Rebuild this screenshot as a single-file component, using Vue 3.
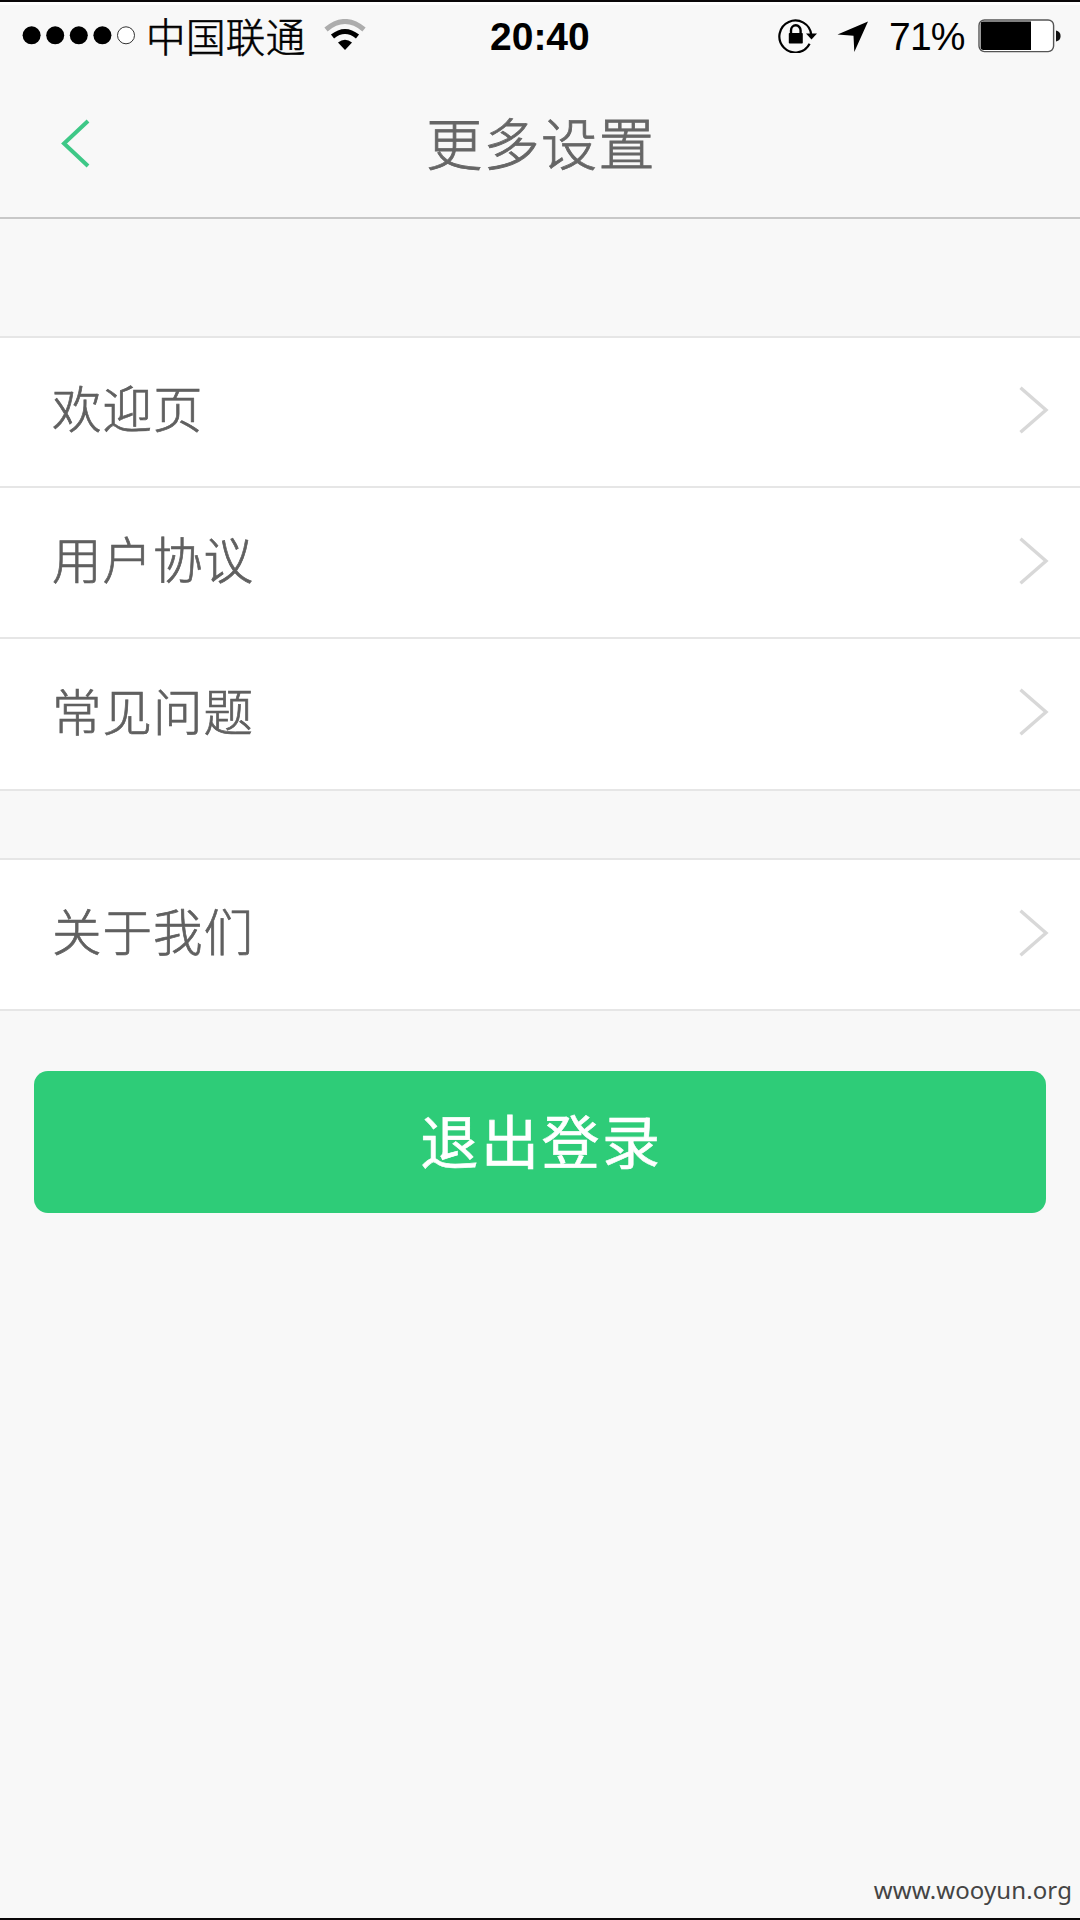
<script setup>
const groups = [
  { id: 'help', items: ['欢迎页', '用户协议', '常见问题'] },
  { id: 'about', items: ['关于我们'] }
]
</script>

<template>
  <div class="screen">
    <div class="status">
      <svg class="signal" width="114" height="20" viewBox="0 0 114 20">
        <circle v-for="n in 4" :key="n" :cx="9.6 + (n - 1) * 23.6" cy="10.3" r="9" fill="#000" />
        <circle cx="104" cy="10.3" r="8.5" fill="#fff" stroke="#333" stroke-width="1" />
      </svg>
      <span class="carrier">中国联通</span>
      <svg class="wifi" width="42" height="32" viewBox="0 0 42 32">
        <path d="M2 10.5Q21-5.5 40 10.5" fill="none" stroke="#adadad" stroke-width="5" />
        <path d="M8.5 17.5Q21 7.5 33.5 17.5" fill="none" stroke="#000" stroke-width="5" />
        <path d="M14 23.5Q21 18 28 23.5L21 31Z" fill="#000" />
      </svg>
      <span class="time">20:40</span>
      <svg class="lock" width="40" height="36" viewBox="0 0 40 36">
        <path d="M31.6 26.8A16 16 0 1 1 33.3 18" fill="none" stroke="#000" stroke-width="2.2" />
        <path d="M28 16.5H39L33.5 22.5Z" fill="#000" />
        <path d="M13 17V13.5A4.8 5.2 0 0 1 22.6 13.5V17" fill="none" stroke="#000" stroke-width="2.4" />
        <rect x="10.8" y="16" width="14" height="10.5" rx="0.8" fill="#000" />
      </svg>
      <svg class="arrow" width="32" height="32" viewBox="0 0 32 32">
        <path d="M31 0.5L17.3 31L16.5 14.8L0.5 13.6Z" fill="#000" />
      </svg>
      <span class="percent">71%</span>
      <svg class="battery" width="84" height="34" viewBox="0 0 84 34">
        <rect x="1" y="1" width="74.6" height="31.6" rx="5.5" fill="#fff" stroke="#555" stroke-width="1.4" />
        <path d="M5 2.6H53V31H5Q2.6 31 2.6 28.6V5Q2.6 2.6 5 2.6Z" fill="#000" />
        <path d="M78 11.5Q82.6 12.5 82.6 17T78 22.5Z" fill="#111" />
      </svg>
    </div>

    <header class="nav">
      <svg class="back" width="32" height="52" viewBox="0 0 32 52">
        <path d="M28 3L4 25.5L28 48" fill="none" stroke="#3ec887" stroke-width="4" />
      </svg>
      <h1 class="title">更多设置</h1>
    </header>

    <main class="content">
      <ul v-for="group in groups" :key="group.id" class="group">
        <li v-for="label in group.items" :key="label" class="row">
          <span class="label">{{ label }}</span>
          <svg class="chevron" width="30" height="48" viewBox="0 0 30 48">
            <path d="M1.5 1.8L27 24L1.5 46.2" fill="none" stroke="#d8d8d8" stroke-width="3.4" />
          </svg>
        </li>
      </ul>
      <button class="logout" type="button">退出登录</button>
    </main>

    <footer class="source">www.wooyun.org</footer>
  </div>
</template>

<style>
body {
  margin: 0;
}
</style>

<style scoped>
.screen {
  box-sizing: border-box;
  width: 1080px;
  height: 1920px;
  display: flex;
  flex-direction: column;
  background: #f8f8f8;
  border-top: 2px solid #0a0809;
  border-bottom: 2px solid #0a0809;
  font-family: "Liberation Sans", "Noto Sans CJK SC", sans-serif;
  overflow: hidden;
}

.status {
  height: 68px;
  flex: none;
  display: flex;
  align-items: flex-start;
  color: #000;
  border-top: 3px solid #fff;
  box-sizing: border-box;
}

.status > * {
  flex: none;
  white-space: nowrap;
}

.signal {
  margin: 20px 0 0 22px;
}

.carrier {
  width: 162px;
  margin: 1px 0 0 10px;
  font: 300 39.5px/58px "Noto Sans CJK SC", sans-serif;
  letter-spacing: 0.4px;
  -webkit-text-stroke: 0.6px #000;
}

.wifi {
  margin: 14px 0 0 16px;
}

.time {
  width: 102px;
  margin: 9px 0 0 124px;
  font-size: 39px;
  line-height: 46px;
  font-weight: 700;
}

.lock {
  margin: 12px 0 0 186px;
}

.arrow {
  margin: 16px 0 0 19px;
}

.percent {
  width: 80px;
  margin: 9px 0 0 20px;
  font-size: 39px;
  line-height: 46px;
  letter-spacing: -0.8px;
}

.battery {
  margin: 14px 0 0 9px;
}

.nav {
  height: 149px;
  flex: none;
  box-sizing: border-box;
  display: grid;
  grid-template-columns: 200px 1fr 200px;
  align-items: start;
  border-bottom: 2px solid #c8c8c8;
}

.back {
  margin: 48px 0 0 60px;
}

.title {
  margin: 31px 0 0;
  padding-left: 2px;
  text-align: center;
  font: 300 56px/80px "Noto Sans CJK SC", sans-serif;
  letter-spacing: 1.4px;
  color: #666;
  -webkit-text-stroke: 0.8px #666;
}

.content {
  padding-top: 117px;
}

.group {
  list-style: none;
  margin: 0 0 67px;
  padding: 0;
  background: #fff;
  border-top: 2px solid #e6e6e6;
}

.group:nth-of-type(2) {
  margin-bottom: 60px;
}

.row {
  height: 151px;
  box-sizing: border-box;
  display: flex;
  justify-content: space-between;
  align-items: center;
  padding: 0 31px 4px 52px;
  border-bottom: 2px solid #e6e6e6;
}

.row:first-child:not(:last-child) {
  height: 150px;
  padding-bottom: 5px;
}

.row:nth-child(3) {
  height: 152px;
}

.label {
  margin-bottom: 5px;
  font: 300 49.5px/70px "Noto Sans CJK SC", sans-serif;
  letter-spacing: 1px;
  color: #606060;
  -webkit-text-stroke: 0.7px #606060;
}

.logout {
  display: block;
  box-sizing: border-box;
  width: 1012px;
  height: 142px;
  margin: 0 34px;
  padding: 0 0 5px 3px;
  border: 0;
  border-radius: 14px;
  background: #2ecc78;
  color: #fff;
  font: 400 58px/137px "Noto Sans CJK SC", sans-serif;
  letter-spacing: 2.6px;
  -webkit-text-stroke: 0.6px #fff;
}

.source {
  margin: auto 8px 11px 0;
  text-align: right;
  font: 400 24px/34px "Noto Sans", sans-serif;
  letter-spacing: 0.1px;
  color: #444;
}
</style>
